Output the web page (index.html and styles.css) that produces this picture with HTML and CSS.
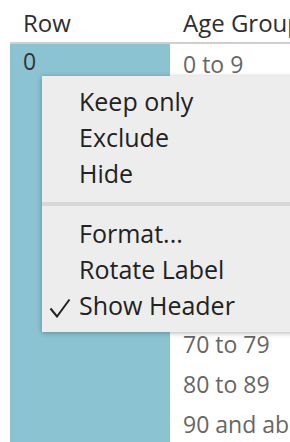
FILE: index.html
```html
<!DOCTYPE html>
<html>
<head>
<meta charset="utf-8">
<link rel="stylesheet" href="styles.css">
</head>
<body>
<div class="table">
  <div class="header">
    <div class="hcell row-col">Row</div>
    <div class="hcell age-col">Age Group</div>
  </div>
  <div class="body">
    <div class="row-cell"><span class="rowval">0</span></div>
    <div class="age-list">
      <div class="age">0 to 9</div>
      <div class="age">10 to 19</div>
      <div class="age">20 to 29</div>
      <div class="age">30 to 39</div>
      <div class="age">40 to 49</div>
      <div class="age">50 to 59</div>
      <div class="age">60 to 69</div>
      <div class="age">70 to 79</div>
      <div class="age">80 to 89</div>
      <div class="age">90 and above</div>
    </div>
  </div>
</div>
<div class="menu">
  <div class="item">Keep only</div>
  <div class="item">Exclude</div>
  <div class="item">Hide</div>
  <div class="sep"></div>
  <div class="item">Format...</div>
  <div class="item">Rotate Label</div>
  <div class="item checked"><svg class="check" width="22" height="20" viewBox="0 0 22 20"><path d="M1.5 10.5 L8 18.5 L20.5 1.5" fill="none" stroke="#222" stroke-width="2"/></svg>Show Header</div>
</div>
</body>
</html>
```
FILE: styles.css
```css
html, body {
  margin: 0;
  padding: 0;
  background: #fff;
  width: 290px;
  height: 442px;
  overflow: hidden;
  font-family: "Open Sans", Lato, sans-serif;
}
.table {
  margin-left: 10px;
  width: 280px;
  overflow: hidden;
}
.header {
  display: flex;
  height: 42px;
  border-bottom: 2px solid #cfcfcf;
}
.hcell {
  font-size: 24px;
  color: #2e2e2e;
  padding-left: 13px;
  line-height: 46px;
  height: 42px;
  white-space: nowrap;
}
.row-col { width: 147px; flex-shrink: 0; }
.age-col { flex: 1; }
.body {
  display: flex;
  height: 398px;
}
.row-cell {
  width: 160px;
  flex-shrink: 0;
  background: #8bc3d2;
  padding-left: 13px;
  box-sizing: border-box;
}
.rowval {
  display: block;
  font-size: 23px;
  color: #333;
  line-height: 34px;
}
.age-list {
  flex: 1;
  padding-left: 13px;
  white-space: nowrap;
  overflow: hidden;
}
.age {
  height: 40px;
  line-height: 40px;
  font-size: 23px;
  color: #666;
}
.menu {
  position: absolute;
  left: 42px;
  top: 76px;
  width: 270px;
  height: 256px;
  box-sizing: border-box;
  background: #ededed;
  padding: 7px 0 9px 0;
  box-shadow: 0 1px 5px rgba(0,0,0,0.3);
}
.item {
  position: relative;
  height: 36px;
  line-height: 36px;
  padding-left: 37px;
  font-size: 25px;
  color: #222;
  white-space: nowrap;
}
.sep {
  height: 4px;
  background: #d8d8d8;
  margin: 11px 0 9px 0;
}
.check {
  position: absolute;
  left: 7px;
  top: 11px;
}
```
